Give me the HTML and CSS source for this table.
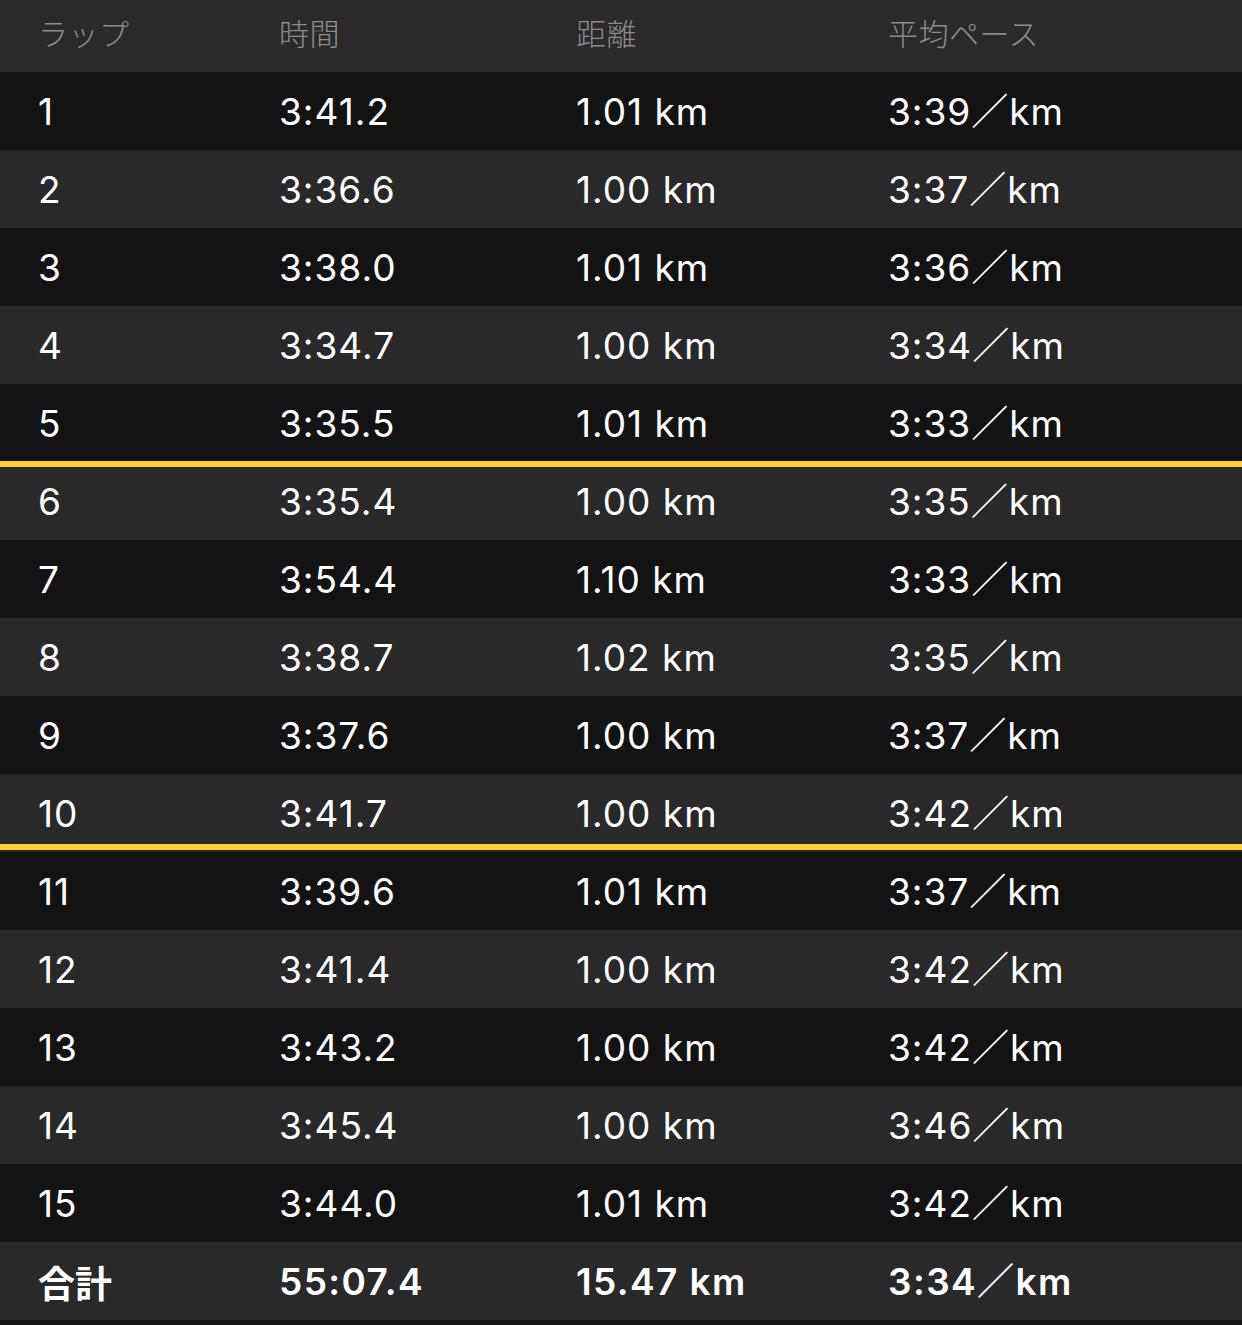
FILE: index.html
```html
<!DOCTYPE html>
<html lang="ja">
<head>
<meta charset="utf-8">
<title>ラップ</title>
<link rel="stylesheet" href="styles.css">
</head>
<body>
<div class="table">
  <div class="row head"><span>ラップ</span><span>時間</span><span>距離</span><span>平均ペース</span></div>
  <div class="row dark"><span>1</span><span>3:41.2</span><span>1.01 km</span><span>3:39／km</span></div>
  <div class="row light"><span>2</span><span>3:36.6</span><span>1.00 km</span><span>3:37／km</span></div>
  <div class="row dark"><span>3</span><span>3:38.0</span><span>1.01 km</span><span>3:36／km</span></div>
  <div class="row light"><span>4</span><span>3:34.7</span><span>1.00 km</span><span>3:34／km</span></div>
  <div class="row dark"><span>5</span><span>3:35.5</span><span>1.01 km</span><span>3:33／km</span></div>
  <div class="row light mark-top"><span>6</span><span>3:35.4</span><span>1.00 km</span><span>3:35／km</span></div>
  <div class="row dark"><span>7</span><span>3:54.4</span><span>1.10 km</span><span>3:33／km</span></div>
  <div class="row light"><span>8</span><span>3:38.7</span><span>1.02 km</span><span>3:35／km</span></div>
  <div class="row dark"><span>9</span><span>3:37.6</span><span>1.00 km</span><span>3:37／km</span></div>
  <div class="row light mark-bottom"><span>10</span><span>3:41.7</span><span>1.00 km</span><span>3:42／km</span></div>
  <div class="row dark"><span>11</span><span>3:39.6</span><span>1.01 km</span><span>3:37／km</span></div>
  <div class="row light"><span>12</span><span>3:41.4</span><span>1.00 km</span><span>3:42／km</span></div>
  <div class="row dark"><span>13</span><span>3:43.2</span><span>1.00 km</span><span>3:42／km</span></div>
  <div class="row light"><span>14</span><span>3:45.4</span><span>1.00 km</span><span>3:46／km</span></div>
  <div class="row dark"><span>15</span><span>3:44.0</span><span>1.01 km</span><span>3:42／km</span></div>
  <div class="row light total"><span>合計</span><span>55:07.4</span><span>15.47 km</span><span>3:34／km</span></div>
</div>
</body>
</html>
```

FILE: styles.css
```css
html, body {
  margin: 0;
  padding: 0;
  background: #131313;
}

body {
  width: 1242px;
  height: 1325px;
  overflow: hidden;
  font-family: "Inter", "Noto Sans CJK JP", sans-serif;
  color: #ffffff;
}

.table {
  display: flex;
  flex-direction: column;
}

.row {
  position: relative;
  display: grid;
  grid-template-columns: 241px 297px 312px 1fr;
  align-items: center;
  box-sizing: border-box;
  height: 78px;
  padding-left: 38px;
  padding-top: 2px;
  font-size: 37px;
  line-height: 44px;
  font-weight: 400;
  letter-spacing: 1px;
  white-space: nowrap;
}

.row.head {
  height: 72px;
  background: #2a2a2a;
  color: #8c8c8c;
  font-size: 30px;
  line-height: 36px;
  letter-spacing: 0.5px;
  padding-top: 0;
  padding-bottom: 8px;
  font-family: "Noto Sans CJK JP", sans-serif;
  font-weight: 300;
}

.row.dark { background: #131313; }
.row.light { background: #292929; }

.row.total {
  font-weight: 600;
  letter-spacing: 1.4px;
}

.row.total span:first-child {
  font-family: "Noto Sans CJK JP", sans-serif;
  font-weight: 700;
  letter-spacing: 0;
}

.mark-top::before,
.mark-bottom::after {
  content: "";
  position: absolute;
  left: 0;
  right: 0;
  height: 6px;
  background: #ffcf2e;
}

.mark-top::before { top: -1px; }
.mark-bottom::after { bottom: 2px; }
```
